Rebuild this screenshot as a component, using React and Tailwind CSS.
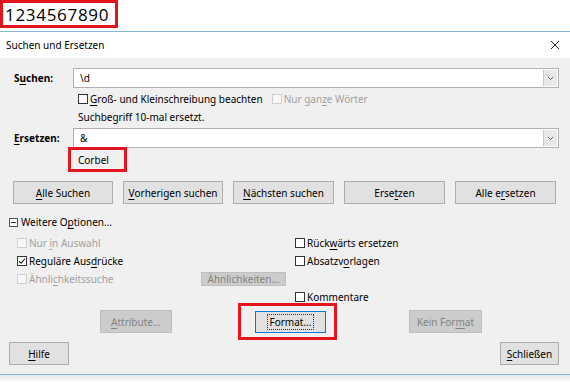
import React from "react";

const U = ({ children }) => <span className="underline underline-offset-[2px] decoration-[1px]">{children}</span>;

const Cb = ({ checked, disabled }) => (
  <span
    className={
      "inline-flex items-center justify-center w-[10px] h-[10px] border shrink-0 " +
      (disabled ? "border-[#cfcfcf] bg-[#f7f7f7]" : "border-[#333333] bg-white")
    }
  >
    {checked && (
      <svg width="8" height="8" viewBox="0 0 8 8">
        <path d="M1 4.2 L3 6.2 L7 1.6" fill="none" stroke="#222" strokeWidth="1.1" />
      </svg>
    )}
  </span>
);

const Btn = ({ children, className = "" }) => (
  <div
    className={
      "flex items-center justify-center h-[23px] bg-[#e1e1e1] border border-[#adadad] text-black " + className
    }
  >
    {children}
  </div>
);

const DisBtn = ({ children, className = "" }) => (
  <div
    className={
      "flex items-center justify-center bg-[#cccccc] border border-[#bfbfbf] text-[#838383] " + className
    }
  >
    {children}
  </div>
);

const Combo = ({ value }) => (
  <div className="flex h-[20px] w-[486px] border border-[#b0b0b0] bg-white items-stretch">
    <div className="flex-1 flex items-center pl-[6px]">{value}</div>
    <div className="w-[14px] my-[1px] mr-[1px] bg-[#e8e8e8] border-l border-[#c8c8c8] flex items-center justify-center">
      <svg width="7" height="5" viewBox="0 0 7 5">
        <path d="M1 1 L3.5 3.5 L6 1" fill="none" stroke="#555" strokeWidth="0.9" />
      </svg>
    </div>
  </div>
);

export default function App() {
  return (
    <div
      className="w-[570px] h-[384px] bg-white overflow-hidden text-[10px] leading-none text-black"
      style={{ fontFamily: '"Noto Sans", "Open Sans", sans-serif' }}
    >
      {/* top document text */}
      <div className="h-[31px] bg-white">
        <div className="w-[118px] h-[28px] border-[3px] border-[#e3161e] flex items-center pl-[2px]">
          <span className="text-[17px] tracking-[0.7px]" style={{ fontFamily: '"Open Sans", sans-serif' }}>
            1234567890
          </span>
        </div>
      </div>

      {/* dialog */}
      <div className="border-t border-[#86b6d8]">
        <div className="h-[26px] bg-white flex items-center justify-between pl-[6px] pr-[10px]">
          <span>Suchen und Ersetzen</span>
          <svg width="10" height="10" viewBox="0 0 10 10">
            <path d="M1 1 L9 9 M9 1 L1 9" stroke="#222" strokeWidth="1" />
          </svg>
        </div>

        <div className="bg-[#f0f0f0] h-[317px] flex flex-col border-b border-[#86b6d8]">
          {/* Suchen */}
          <div className="mt-[10px] flex items-center">
            <div className="w-[73px] pl-[14px] font-bold">
              S<U>u</U>chen:
            </div>
            <Combo value="\d" />
          </div>
          <div className="mt-[4px] h-[14px] flex items-center pl-[78px]">
            <Cb />
            <span className="ml-[2px]">
              <U>G</U>roß- und Kleinschreibung beachten
            </span>
            <span className="ml-[9px]">
              <Cb disabled />
            </span>
            <span className="ml-[2px] text-[#a0a0a0]">
              Nur gan<U>z</U>e Wörter
            </span>
          </div>
          <div className="mt-[4px] h-[14px] flex items-center pl-[78px]">Suchbegriff 10-mal ersetzt.</div>
          <div className="mt-[4px] flex items-center">
            <div className="w-[73px] pl-[14px] font-bold">
              <U>E</U>rsetzen:
            </div>
            <Combo value="&" />
          </div>
          <div className="-mt-px ml-[68px] w-[59px] h-[25px] border-[3px] border-[#e3161e] flex items-center pl-[7px]">
            Corbel
          </div>

          {/* buttons row */}
          <div className="mt-[9px] flex pl-[13px] gap-[10px]">
            <Btn className="w-[100px]">
              <U>A</U>lle Suchen
            </Btn>
            <Btn className="w-[100px]">
              <U>V</U>orherigen suchen
            </Btn>
            <Btn className="w-[101px]">
              <U>N</U>ächsten suchen
            </Btn>
            <Btn className="w-[101px]">
              Erse<U>t</U>zen
            </Btn>
            <Btn className="w-[101px]">
              Alle e<U>r</U>setzen
            </Btn>
          </div>

          {/* Weitere Optionen */}
          <div className="mt-[11px] h-[14px] flex items-center pl-[9px]">
            <span className="w-[9px] h-[9px] border border-[#555] bg-white flex items-center justify-center">
              <span className="w-[5px] h-px bg-[#333]" />
            </span>
            <span className="ml-[3px]">
              Weitere O<U>p</U>tionen...
            </span>
          </div>

          <div className="mt-[7px] grid grid-cols-[295px_1fr] gap-y-[4px]">
            <div className="h-[14px] flex items-center pl-[17px]">
              <Cb disabled />
              <span className="ml-[2px] text-[#a0a0a0]">
                Nur <U>i</U>n Auswahl
              </span>
            </div>
            <div className="h-[14px] flex items-center">
              <Cb />
              <span className="ml-[2px]">
                Rück<U>w</U>ärts ersetzen
              </span>
            </div>
            <div className="h-[14px] flex items-center pl-[17px]">
              <Cb checked />
              <span className="ml-[2px]">
                Reguläre Aus<U>d</U>rücke
              </span>
            </div>
            <div className="h-[14px] flex items-center">
              <Cb />
              <span className="ml-[2px]">
                Absatzv<U>o</U>rlagen
              </span>
            </div>
            <div className="h-[14px] flex items-center pl-[17px]">
              <Cb disabled />
              <span className="ml-[2px] text-[#a0a0a0] w-[172px]">
                Ähnli<U>c</U>hkeitssuche
              </span>
              <DisBtn className="w-[85px] h-[14px]">Ähnlichkeiten...</DisBtn>
            </div>
            <div className="h-[14px]" />
            <div className="h-[14px]" />
            <div className="h-[14px] flex items-center">
              <Cb />
              <span className="ml-[2px]">
                <U>K</U>ommentare
              </span>
            </div>
          </div>

          {/* second button row */}
          <div className="-mt-px h-[37px] flex items-center">
            <DisBtn className="ml-[100px] w-[72px] h-[23px]">
              <U>A</U>ttribute...
            </DisBtn>
            <div className="ml-[66px] w-[99px] h-[37px] border-[3px] border-[#e3161e] flex items-center pl-[14px]">
              <div className="w-[71px] h-[22px] bg-[#e1e1e1] border border-[#0078d7] flex items-center justify-center">
                <span className="border border-dotted border-[#333] px-[2px] py-[2px]">Format...</span>
              </div>
            </div>
            <DisBtn className="ml-[72px] w-[73px] h-[23px]">
              Kein For<U>m</U>at
            </DisBtn>
          </div>

          <div className="mt-[2px] flex justify-between pl-[9px] pr-[11px]">
            <Btn className="w-[60px] h-[22px]">
              <U>H</U>ilfe
            </Btn>
            <Btn className="w-[59px] h-[22px]">
              <U>S</U>chließen
            </Btn>
          </div>
        </div>
      </div>
      <div className="h-[8px] bg-gradient-to-b from-[#e6e6e6] to-white" />
    </div>
  );
}
